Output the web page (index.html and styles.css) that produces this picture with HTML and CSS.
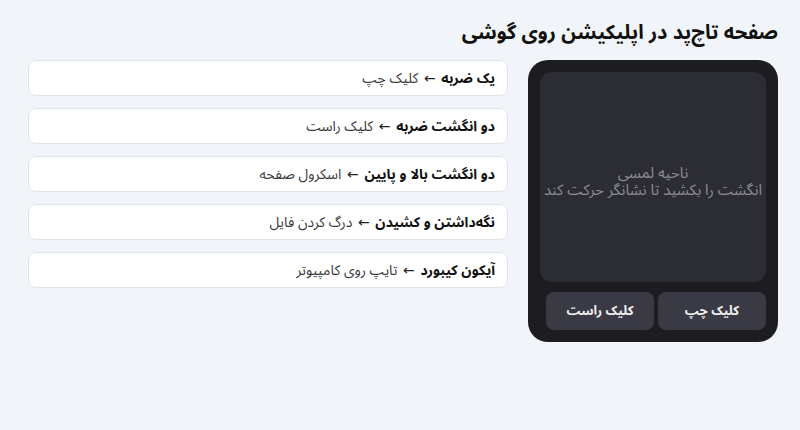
FILE: index.html
```html
<!DOCTYPE html>
<html lang="fa" dir="rtl">
<head>
<meta charset="utf-8">
<title>تاچ‌پد</title>
<link rel="stylesheet" href="styles.css">
</head>
<body>
<h1 class="title">صفحه تاچ‌پد در اپلیکیشن روی گوشی</h1>
<div class="row">
  <div class="phone">
    <div class="touch">
      <div class="touch-text">
        <div class="touch-line">ناحیه لمسی</div>
        <div class="touch-line">انگشت را بکشید تا نشانگر حرکت کند</div>
      </div>
    </div>
    <div class="buttons">
      <div class="btn">کلیک چپ</div>
      <div class="btn">کلیک راست</div>
    </div>
  </div>
  <div class="list">
    <div class="card"><b>یک ضربه</b> <span class="arrow">←</span> کلیک چپ</div>
    <div class="card"><b>دو انگشت ضربه</b> <span class="arrow">←</span> کلیک راست</div>
    <div class="card"><b>دو انگشت بالا و پایین</b> <span class="arrow">←</span> اسکرول صفحه</div>
    <div class="card"><b>نگه‌داشتن و کشیدن</b> <span class="arrow">←</span> درگ کردن فایل</div>
    <div class="card"><b>آیکون کیبورد</b> <span class="arrow">←</span> تایپ روی کامپیوتر</div>
  </div>
</div>
</body>
</html>
```
FILE: styles.css
```css
html, body {
  margin: 0;
  background: #f1f4f8;
}
body {
  padding: 22px;
  font-family: "Noto Sans Arabic", "Noto Sans", sans-serif;
  color: #222;
}
.title {
  margin: 0 0 15px 0;
  font-size: 20px;
  line-height: 23px;
  font-weight: bold;
  color: #111;
}
.row {
  display: flex;
  gap: 20px;
  align-items: flex-start;
}
.phone {
  width: 250px;
  box-sizing: border-box;
  padding: 12px;
  background: #1c1c21;
  border-radius: 20px;
  display: flex;
  flex-direction: column;
  gap: 10px;
}
.touch {
  height: 210px;
  background: #2c2c34;
  border-radius: 12px;
  display: flex;
  align-items: center;
  justify-content: center;
  text-align: center;
}
.touch-text {
  color: #8c8d95;
  font-size: 15px;
  margin-top: 9px;
}
.touch-line {
  height: 17px;
  line-height: 17px;
  white-space: nowrap;
}
.buttons {
  display: flex;
  gap: 4px;
  margin-left: 6px;
}
.btn {
  flex: 1;
  height: 38px;
  background: #3a3a44;
  border-radius: 8px;
  color: #f0f0f0;
  font-size: 13px;
  font-weight: bold;
  display: flex;
  align-items: center;
  justify-content: center;
}
.list {
  width: 480px;
  display: flex;
  flex-direction: column;
  gap: 12px;
}
.card {
  box-sizing: border-box;
  height: 36px;
  line-height: 34px;
  background: #fff;
  border: 1px solid #dfe3e8;
  border-radius: 8px;
  padding: 0 12px;
  font-size: 14px;
  color: #3a3a3a;
}
.card b {
  color: #111;
}
.arrow {
  display: inline-block;
  margin: 0 2px;
  font-family: "DejaVu Sans", sans-serif;
  font-size: 14px;
  color: #222;
}
```
